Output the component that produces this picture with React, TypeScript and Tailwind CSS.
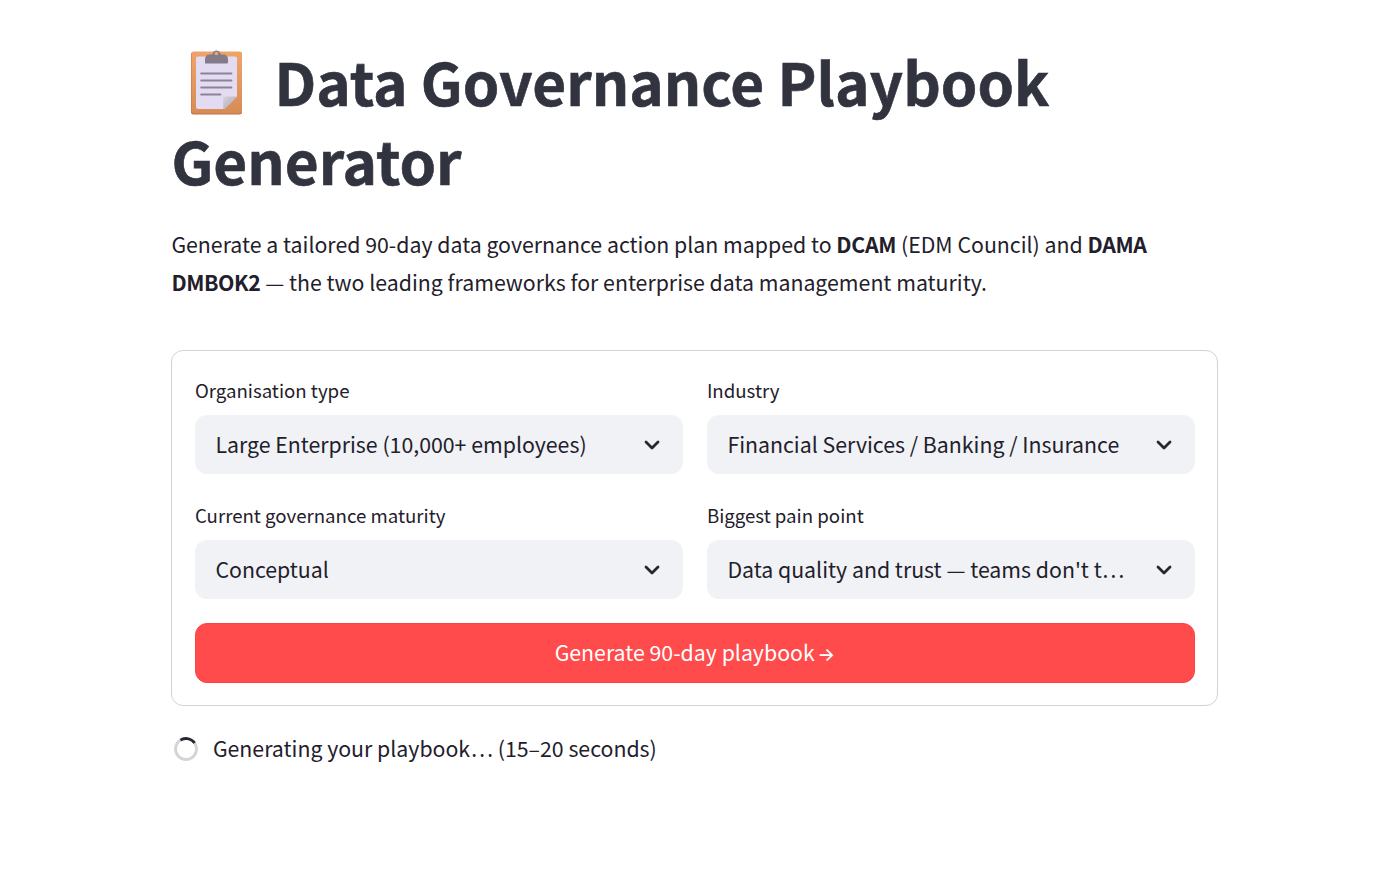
import { useState } from 'react';

type Field = {
  label: string;
  value: string;
};

const fields: Field[] = [
  { label: 'Organisation type', value: 'Large Enterprise (10,000+ employees)' },
  { label: 'Industry', value: 'Financial Services / Banking / Insurance' },
  { label: 'Current governance maturity', value: 'Conceptual' },
  { label: 'Biggest pain point', value: "Data quality and trust — teams don't t…" },
];

function ClipboardIcon() {
  return (
    <svg width="52" height="66" viewBox="0 0 52 66" className="shrink-0">
      <defs>
        <linearGradient id="board" x1="0" y1="0" x2="0" y2="1">
          <stop offset="0" stopColor="#eea469" />
          <stop offset="1" stopColor="#d68c55" />
        </linearGradient>
        <linearGradient id="fold" x1="0" y1="0" x2="1" y2="1">
          <stop offset="0" stopColor="#d8d2e0" />
          <stop offset="0.6" stopColor="#bdb5c6" />
        </linearGradient>
      </defs>
      <rect x="0" y="3" width="51" height="62.5" rx="2.5" fill="#c9694f" />
      <rect x="0.5" y="2.5" width="50.5" height="62" rx="2.5" fill="url(#board)" />
      <path d="M7 7.500h37a2 2 0 0 1 2 2V47.500L33.500 60H7a2 2 0 0 1-2-2V9.500a2 2 0 0 1 2-2z" fill="#e3dbf2" />
      <path d="M46 47.500L33.500 60H32.200V49.500a2 2 0 0 1 2-2z" fill="url(#fold)" />
      <path
        d="M14 14.500V10a4.500 4.500 0 0 1 4.500-4.500h1.700c.8 0 1.300-.5 1.500-1.300a4 4 0 0 1 7.600 0c.2.800.7 1.300 1.500 1.300h1.700A4.500 4.500 0 0 1 37 10v3.500a1 1 0 0 1-1 1z"
        fill="#857b88"
      />
      <circle cx="25.400" cy="4.500" r="1.800" fill="#eea469" />
      <path d="M10.300 24.500h30M10.300 31.500h30M10.300 38.500h30M10.300 45.500h19" stroke="#8d8395" strokeWidth="2.200" strokeLinecap="round" />
    </svg>
  );
}

function ChevronIcon() {
  return (
    <svg width="16" height="10" viewBox="0 0 16 10" fill="none" className="shrink-0">
      <path d="M2 2l6 6 6-6" stroke="#262730" strokeWidth="2.800" strokeLinecap="round" strokeLinejoin="round" />
    </svg>
  );
}

function Spinner() {
  return (
    <svg width="24" height="24" viewBox="0 0 24 24" fill="none" className="mt-px shrink-0">
      <circle cx="12" cy="12" r="10.500" stroke="#d4d4d6" strokeWidth="2.800" />
      <path d="M6.500 3.100A10.500 10.500 0 0 1 20.600 6" stroke="#262730" strokeWidth="2.800" />
    </svg>
  );
}

function SelectField({ label, value }: Field) {
  return (
    <div className="min-w-0">
      <div className="h-[42px] text-[18.65px] leading-[34px]">{label}</div>
      <button type="button" className="flex h-[59px] w-full items-center justify-between rounded-xl bg-[#f0f2f6] pl-[20.500px] pr-[23px] text-left">
        <span className="pb-0.5 text-[21.3px] leading-[38px] whitespace-nowrap">{value}</span>
        <ChevronIcon />
      </button>
    </div>
  );
}

export default function App() {
  const [loading, setLoading] = useState(true);

  return (
    <main className="min-h-[887px] bg-white font-['Noto_Sans_CJK_KR',sans-serif] text-[#1f202b]">
      <div className="ml-[171.400px] w-[1047px] pt-[42px]">
        <h1 className="text-[58.5px] leading-[78.500px] font-bold text-[#31333f] [-webkit-text-stroke:0.6px_#31333f]">
          <span className="flex items-center">
            <span className="mt-0.5 ml-[19.600px] mr-[31.500px]"><ClipboardIcon /></span>
            <span className="h-[78.500px]">Data Governance Playbook</span>
          </span>
          Generator
        </h1>

        <p className="mt-[26px] text-[21.3px] leading-[38px]">
          Generate a tailored 90-day data governance action plan mapped to <strong className="tracking-[-0.3px]">DCAM</strong> (EDM Council) and{' '}
          <strong className="tracking-[-0.3px]">DAMA</strong>
          <br />
          <strong className="tracking-[-0.4px]">DMBOK2</strong> — the two leading frameworks for enterprise data management maturity.
        </p>

        <form
          onSubmit={(e) => {
            e.preventDefault();
            setLoading(true);
          }}
          className="mt-[49px] rounded-xl border border-[#d3d3d6] px-[22.500px] pt-[22px] pb-[22px]"
        >
          <div className="grid grid-cols-2 gap-x-6 gap-y-6">
            {fields.map((field) => (
              <SelectField key={field.label} {...field} />
            ))}
          </div>
          <button type="submit" className="mt-6 h-[60px] w-full rounded-xl border border-[#ff4242] bg-[#ff4b4b] pb-px text-[21.3px] text-white">
            Generate 90-day playbook <span className="-ml-0.5 font-['Inter'] text-[18.500px] font-medium">→</span>
          </button>
        </form>

        {loading && (
          <div className="mt-6 flex items-center pl-[2.500px] text-[21.3px] leading-[36px]">
            <Spinner />
            <span className="ml-[15px]">Generating your playbook… (15–20 seconds)</span>
          </div>
        )}
      </div>
    </main>
  );
}
